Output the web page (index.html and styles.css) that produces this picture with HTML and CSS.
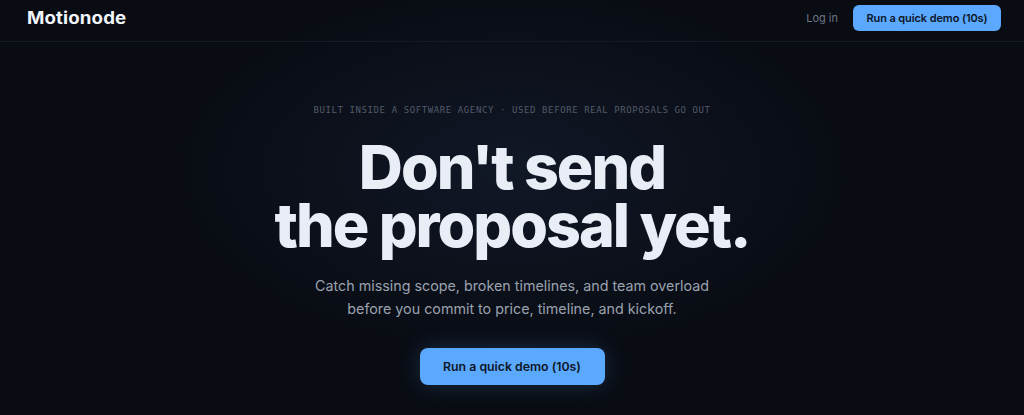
FILE: index.html
```html
<!DOCTYPE html>
<html lang="en">
<head>
<meta charset="utf-8">
<title>Motionode</title>
<link rel="stylesheet" href="styles.css">
</head>
<body>
<div class="page">
  <header class="topbar">
    <div class="logo">Motionode</div>
    <nav class="nav">
      <a class="login" href="#">Log in</a>
      <a class="btn btn-small" href="#">Run a quick demo (10s)</a>
    </nav>
  </header>
  <main class="hero">
    <p class="eyebrow">BUILT INSIDE A SOFTWARE AGENCY · USED BEFORE REAL PROPOSALS GO OUT</p>
    <h1 class="headline">Don't send<br>the proposal yet.</h1>
    <p class="sub">Catch missing scope, broken timelines, and team overload<br>before you commit to price, timeline, and kickoff.</p>
    <a class="btn btn-large" href="#">Run a quick demo (10s)</a>
  </main>
</div>
</body>
</html>
```
FILE: styles.css
```css
* { box-sizing: border-box; }
html, body { margin: 0; padding: 0; }
body {
  background: #090c13;
  color: #e8edf5;
  font-family: Inter, "Noto Sans", sans-serif;
  height: 415px;
  overflow: hidden;
}
.page {
  min-height: 415px;
  background:
    radial-gradient(ellipse 480px 260px at 50% 170px, rgba(30, 45, 75, 0.35), rgba(9, 12, 19, 0) 70%),
    #090c13;
}
.topbar {
  height: 42px;
  display: flex;
  align-items: center;
  justify-content: space-between;
  padding: 0 23px 0 27px;
  border-bottom: 1px solid #151a24;
}
.logo {
  font-family: Inter, sans-serif;
  font-weight: 700;
  font-size: 17px;
  letter-spacing: 0.1px;
  color: #f1f4f9;
  transform: scaleX(1.1);
  transform-origin: left center;
  margin-top: -6px;
}
.nav {
  display: flex;
  align-items: center;
  gap: 15px;
  margin-top: -6px;
}
.login {
  color: #6b7483;
  font-size: 11px;
  text-decoration: none;
}
.btn {
  display: inline-flex;
  align-items: center;
  justify-content: center;
  background: #5ba8ff;
  color: #0d1626;
  font-weight: 600;
  text-decoration: none;
}
.btn-small {
  height: 26px;
  width: 148px;
  border-radius: 6px;
  font-size: 11px;
  letter-spacing: -0.1px;
}
.hero {
  display: flex;
  flex-direction: column;
  align-items: center;
  text-align: center;
  padding-top: 63px;
}
.eyebrow {
  margin: 0;
  font-family: "DejaVu Sans Mono", monospace;
  font-size: 9px;
  letter-spacing: 0.6px;
  color: #525b6a;
}
.headline {
  margin: 23px 0 0;
  font-family: Inter, sans-serif;
  font-weight: 800;
  font-size: 61px;
  line-height: 58px;
  letter-spacing: -2px;
  color: #e9eef6;
}
.sub {
  margin: 20px 0 0;
  font-size: 14.3px;
  line-height: 23px;
  color: #9aa2b0;
}
.btn-large {
  margin-top: 28px;
  height: 37px;
  width: 185px;
  border-radius: 8px;
  font-size: 12.3px;
  box-shadow: 0 0 22px rgba(91, 168, 255, 0.22);
}
```
